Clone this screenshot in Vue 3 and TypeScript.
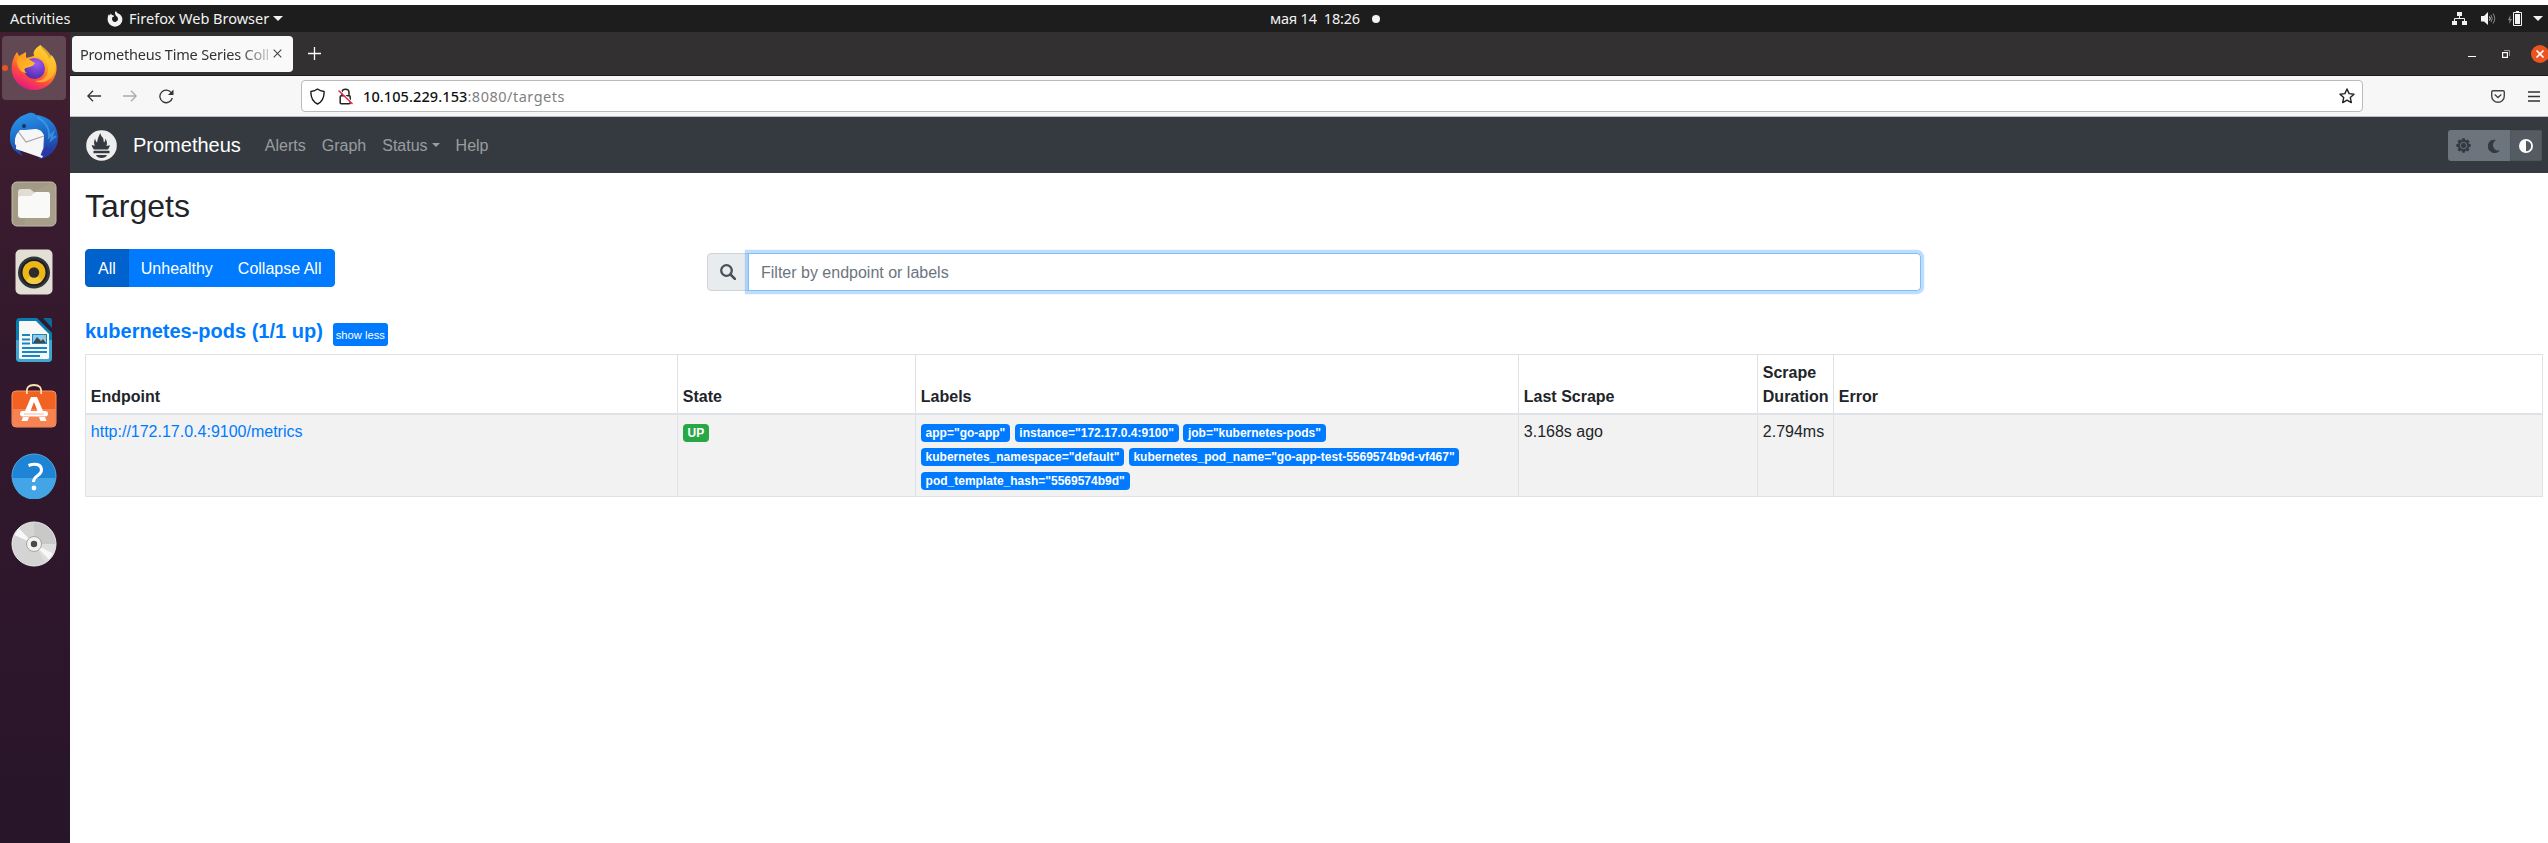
<script setup lang="ts">
interface Column { title: string; cls: string }

const navLinks: { label: string; caret?: boolean }[] = [
  { label: 'Alerts' },
  { label: 'Graph' },
  { label: 'Status', caret: true },
  { label: 'Help' },
]
const filters: string[] = ['All', 'Unhealthy', 'Collapse All']
const columns: Column[] = [
  { title: 'Endpoint', cls: 'c-endpoint' },
  { title: 'State', cls: 'c-state' },
  { title: 'Labels', cls: 'c-labels' },
  { title: 'Last Scrape', cls: 'c-last' },
  { title: 'Scrape Duration', cls: 'c-duration' },
  { title: 'Error', cls: 'c-error' },
]
const labels: string[] = [
  'app="go-app"',
  'instance="172.17.0.4:9100"',
  'job="kubernetes-pods"',
  'kubernetes_namespace="default"',
  'kubernetes_pod_name="go-app-test-5569574b9d-vf467"',
  'pod_template_hash="5569574b9d"',
]
const rays: number[] = [0, 45, 90, 135, 180, 225, 270, 315]
</script>

<template>
  <div class="desktop">
    <header class="topbar">
      <span class="activities">Activities</span>
      <svg class="ff-mono" width="16" height="16" viewBox="0 0 16 16">
        <path d="M8 1c.6-.6.8-.7 1.100-1 .2 1 .8 1.600 1.700 2.300C13.800 3.500 15.400 5.600 15.400 8.500A7.400 7.200 0 0 1 .6 8.500C.6 6.300 1 4.500 2 3l.6 1.400L4 2.600l.8 1.500c1 0 1.800.3 2.300.9-.4 1-1.300 1.200-2.100 1.500C5.200 8 5 8.400 5.200 9a3 3 0 0 0 5.800-.7c0-1.300-.5-2.200-1.500-3C8.400 4.200 7.800 2.700 8 1z" fill="#f2f2f2" />
      </svg>
      <span class="appname">Firefox Web Browser</span>
      <svg class="tri" width="10" height="5" viewBox="0 0 10 5"><path d="M0 0h10L5 5z" fill="#f2f2f2" /></svg>
      <div class="clock"><span>мая 14&nbsp; 18:26</span><i></i></div>
      <div class="tray">
        <svg width="15" height="14" viewBox="0 0 15 14">
          <path d="M5 0h5v4H5zM0 9h5v4H0zM10 9h5v4h-5z" fill="#f2f2f2" />
          <path d="M7.500 4v2.500M2.500 9V6.500h10V9" fill="none" stroke="#f2f2f2" />
        </svg>
        <svg class="vol" width="15" height="14" viewBox="0 0 15 14">
          <path d="M0 4h3l4-4v13L3 9.500H0z" fill="#f2f2f2" />
          <path d="M8.500 4.500q1.500 2 0 4" fill="none" stroke="#f2f2f2" />
          <path d="M10 3q2.500 3.500 0 7M12 1.500q3.500 5 0 10" fill="none" stroke="#8a8a8a" />
        </svg>
        <svg class="bat" width="14" height="16" viewBox="0 0 14 16">
          <path d="M2.500 4L0 9h1.500L1 13 4 8H2.200z" fill="#8a8a8a" />
          <path d="M5.500 1.500h8v13h-8z" fill="none" stroke="#f2f2f2" />
          <path d="M8 0h3v1H8zM7 3h5v10H7z" fill="#f2f2f2" />
        </svg>
        <svg class="tri" width="10" height="5" viewBox="0 0 10 5"><path d="M0 0h10L5 5z" fill="#f2f2f2" /></svg>
      </div>
    </header>

    <div class="body">
      <nav class="dock">
        <div class="slot active">
          <span class="dot"></span>
          <svg width="46" height="48" viewBox="0 0 46 48">
            <defs>
              <linearGradient id="ffa" x1=".8" y1="0" x2=".3" y2="1">
                <stop offset="0" stop-color="#fff14a" /><stop offset=".4" stop-color="#ffa21f" />
                <stop offset=".7" stop-color="#ff4a3f" /><stop offset="1" stop-color="#e31587" />
              </linearGradient>
              <radialGradient id="ffb" cx=".6" cy=".25" r=".8"><stop offset="0" stop-color="#a05bf2" /><stop offset="1" stop-color="#4a2aa8" /></radialGradient>
              <linearGradient id="ffc" x1="0" y1="0" x2="1" y2="1"><stop offset="0" stop-color="#ff9a1f" /><stop offset="1" stop-color="#ffc52e" /></linearGradient>
            </defs>
            <path d="M29.500 1c1 4 4 6 7 10l2 4 2-4c4 5 5.500 9 5 15A22.500 22 0 0 1 .6 25C.4 19 2 14 6 8l2 4 7-4 0 6 8-2c-1-5 2-8 6.500-11z" fill="url(#ffa)" />
            <circle cx="23.500" cy="24.500" r="10.500" fill="url(#ffb)" />
            <path d="M24 12c7 0 14 5 13 15-1 7-7 10-13 10 7 4 19-1 20-12C45 17 39 8 29.500 1 23 5 21 9 24 12z" fill="#ffc32b" opacity=".75" />
            <path d="M6 15c3-3 7-3 10-1l8 5c-1 3-5 4-9 5-3 1-1 4 1 5-5 0-8-3-9-7-1-3-2-4-1-7z" fill="url(#ffc)" />
          </svg>
        </div>
        <div class="slot">
          <svg width="48" height="48" viewBox="0 0 48 48">
            <defs><linearGradient id="tb" x1=".3" y1="0" x2=".6" y2="1"><stop offset="0" stop-color="#2b93e6" /><stop offset=".5" stop-color="#1d6cc9" /><stop offset="1" stop-color="#25339b" /></linearGradient></defs>
            <path d="M19 1c4-1 6 1 7 2 13 1 22 10 22 23 0 9-6 17-14 20l-5 1 3-5L4 38C1 34 0 30 0 25 0 14 6 6 14 3z" fill="url(#tb)" />
            <path d="M6 17L28 14l6 9-1 22L4 36z" fill="#f6f6f6" />
            <path d="M8 19l8 11 18-6" fill="none" stroke="#a5a5a5" stroke-width="1.200" />
            <path d="M0 25C0 13 8 4 20 3c13 0 17 12 15 21-2-5-6-7-10-7l-10 1-5 0c-4 4-6 9-5 14l8 12C5 41 0 34 0 25z" fill="url(#tb)" />
            <path d="M33 37l5-3-1 4 6-4c-3 7-8 12-14 13z" fill="#293aa7" />
            <path d="M6 34l27 10-1 2-26-9z" fill="#f6f6f6" />
            <path d="M27 5c7 4 13 11 12 20l4-4-2 7 5-4" fill="none" stroke="#49aaf0" stroke-width="2" opacity=".6" />
            <circle cx="14" cy="14" r="2" fill="#133368" />
          </svg>
        </div>
        <div class="slot">
          <svg width="46" height="46" viewBox="0 0 46 46">
            <rect x="1" y="1" width="44" height="44" rx="5" fill="#a29a85" stroke="#c4bda9" />
            <path d="M40 2L14 16v28h28q2 0 2-3V5z" fill="#aca48f" opacity=".5" />
            <path d="M7 11q0-3 3-3h9l4 3v6H7z" fill="#e1ddd2" />
            <path d="M7 17q0-2 3-2h10l4-4h13q2 0 2 3v20q0 3-3 3H10q-3 0-3-3z" fill="#f9f9f8" />
          </svg>
        </div>
        <div class="slot">
          <svg width="38" height="46" viewBox="0 0 38 46">
            <rect x=".5" y=".5" width="37" height="45" rx="5" fill="#e3dfd5" />
            <circle cx="19" cy="23.500" r="16" fill="#30343b" /><circle cx="19" cy="23.500" r="13.300" fill="#191c23" />
            <circle cx="19" cy="23.500" r="11.500" fill="#edb718" />
            <path d="M11 32a11.500 11.500 0 0 0 16 0L19 23z" fill="#f8d75b" opacity=".6" />
            <circle cx="19" cy="23.500" r="5.200" fill="#2d2d2d" />
          </svg>
        </div>
        <div class="slot">
          <svg width="38" height="46" viewBox="0 0 38 46">
            <path d="M5 1h17l15 15v25q0 4-4 4H5q-4 0-4-4V5q0-4 4-4z" fill="#087daf" />
            <path d="M1 23h36v18q0 4-4 4H5q-4 0-4-4z" fill="#42a6d5" />
            <path d="M5 4h16l13 13v24q0 1-2 1H6q-2 0-2-1V5q0-1 1-1z" fill="#f7f8f8" />
            <path d="M28 1h7q2 0 2 3v7z" fill="#086b9b" />
            <path d="M7 18h8M7 22.500h8M7 26.500h8M7 31h25M7 35h25M7 39h18" stroke="#1886c3" stroke-width="2" />
            <rect x="17.500" y="17.500" width="14" height="9" fill="#8bcdf0" stroke="#1886c3" />
            <path d="M18 26l4-6 4 4 2-2 3 4z" fill="#464646" /><path d="M29 18h2v2h-2z" fill="#f5b512" />
          </svg>
        </div>
        <div class="slot store">
          <svg width="46" height="46" viewBox="0 0 46 46">
            <rect x="1" y="8" width="44" height="36" rx="4" fill="#f26223" stroke="#f89468" />
            <path d="M1.500 26h43v14q0 3.500-3.500 3.500H5q-3.500 0-3.500-3.500z" fill="#f68452" />
            <path d="M16 11C15 4 18 2 23 2s8 2 7 9" fill="none" stroke="#fbe1ae" stroke-width="1.800" />
            <path d="M20 14h6l6 14h-5.500L23 19l-3.500 9H14zM12 34h6l-1.500 4h-6zM28 34h6l1.500 4h-6z" fill="#fff" />
            <rect x="9" y="28" width="28" height="5.500" rx="2.700" fill="#fff" />
            <path d="M13 31h20" stroke="#f9b79a" />
          </svg>
        </div>
        <div class="slot">
          <svg width="46" height="46" viewBox="0 0 46 46">
            <circle cx="23" cy="23" r="22" fill="#1e84d6" stroke="#5aa7e0" />
            <path d="M1.500 25h43a21.500 21.500 0 0 1-43 0z" fill="#43a5e5" />
            <path d="M17.500 12.500c8-3 13-.5 13 4.500 0 6-8 5-8 12" fill="none" stroke="#fff" stroke-width="3" />
            <circle cx="23" cy="35" r="2.400" fill="#fff" />
          </svg>
        </div>
        <div class="slot">
          <svg width="46" height="46" viewBox="0 0 46 46">
            <circle cx="23" cy="23" r="22" fill="#d4d4d4" stroke="#ededed" />
            <path d="M23 23V1.500A21.500 21.500 0 0 1 44.500 23z" fill="#c9c9c9" />
            <path d="M23 23l21.500 0A21.500 21.500 0 0 1 34 41z" fill="#dedede" />
            <path d="M23 23L3.500 14 8 7.500zM23 23l15 15.500 4-6z" fill="#f8f8f8" />
            <circle cx="23" cy="23" r="7.500" fill="#f2f2f0" stroke="#aaa594" />
            <circle cx="23" cy="23" r="3.200" fill="#4a4a4a" />
          </svg>
        </div>
      </nav>

      <main class="window">
        <div class="tabs">
          <div class="tab">
            <span class="tabtitle">Prometheus Time Series Coll</span>
            <svg width="9" height="9" viewBox="0 0 9 9"><path d="M.7.7l7.600 7.600M8.300.7L.7 8.300" stroke="#444" stroke-width="1.100" /></svg>
          </div>
          <svg class="plus" width="13" height="13" viewBox="0 0 13 13"><path d="M6.500 0v13M0 6.500h13" stroke="#fff" stroke-width="1.300" /></svg>
          <div class="controls">
            <svg class="min" width="8" height="1" viewBox="0 0 8 1"><path d="M0 0h8v1H0z" fill="#fff" /></svg>
            <svg class="restore" width="8" height="8" viewBox="0 0 8 8">
              <path d="M2 .5h5.500V6" fill="none" stroke="#999" /><rect x=".6" y="2.600" width="4.800" height="4.800" fill="none" stroke="#fff" stroke-width="1.200" />
            </svg>
            <svg class="close" width="18" height="18" viewBox="0 0 18 18"><circle cx="9" cy="9" r="9" fill="#e95420" /><path d="M5.500 5.500l7 7M12.500 5.500l-7 7" stroke="#fff" stroke-width="1.600" /></svg>
          </div>
        </div>

        <div class="toolbar">
          <svg class="back" width="14" height="12" viewBox="0 0 14 12"><path d="M14 6H1M6 .7L.8 6 6 11.300" fill="none" stroke="#333" stroke-width="1.300" /></svg>
          <svg class="fwd" width="14" height="12" viewBox="0 0 14 12"><path d="M0 6h13M8 .7L13.200 6 8 11.300" fill="none" stroke="#aaa" stroke-width="1.300" /></svg>
          <svg class="reload" width="15" height="15" viewBox="0 0 15 15"><path d="M13.300 9A6.300 6.300 0 1 1 12.500 4" fill="none" stroke="#333" stroke-width="1.300" /><path d="M14.500.5v5.500H9z" fill="#333" /></svg>
          <div class="urlbar">
            <svg width="15" height="17" viewBox="0 0 15 17"><path d="M7.500 1C5.500 2.500 3 3.200.9 3.500.7 9 2 13.500 7.500 16 13 13.500 14.300 9 14.100 3.500 12 3.200 9.500 2.500 7.500 1z" fill="none" stroke="#1b1b1b" stroke-width="1.400" stroke-linejoin="round" /></svg>
            <svg class="lock" width="15" height="17" viewBox="0 0 15 17">
              <rect x="2.200" y="7.700" width="10" height="8" rx="1" fill="none" stroke="#222" stroke-width="1.500" />
              <path d="M4 7.500V4.500C4 .2 11 .2 11 4.500v3" fill="none" stroke="#222" stroke-width="1.500" />
              <path d="M1.600 2.100l13.500 13" stroke="#fff" stroke-width="1.200" /><path d="M.5 2.500l14 13.500" stroke="#e22850" stroke-width="1.500" />
            </svg>
            <span class="url"><b>10.105.229.153</b>:8080/targets</span>
            <svg class="star" width="16" height="16" viewBox="0 0 16 16"><path d="M8 1l2.100 4.600 4.900.6-3.700 3.400 1 5L8 12.200l-4.300 2.400 1-5L1 6.200l4.900-.6z" fill="none" stroke="#222" stroke-width="1.400" stroke-linejoin="round" /></svg>
          </div>
          <svg class="pocket" width="14" height="13" viewBox="0 0 14 13"><path d="M2 .7h10q1.300 0 1.300 1.300v4a6.300 6.300 0 0 1-12.600 0V2Q.7.700 2 .7z" fill="none" stroke="#444" stroke-width="1.400" /><path d="M3.700 4.500L7 7.500l3.300-3" fill="none" stroke="#444" stroke-width="1.400" /></svg>
          <svg class="menu" width="12" height="11" viewBox="0 0 12 11"><path d="M0 1h12M0 5.500h12M0 10h12" stroke="#333" stroke-width="1.300" /></svg>
        </div>

        <div class="navbar">
          <svg class="logo" width="31" height="31" viewBox="0 0 31 31">
            <circle cx="15.500" cy="15.500" r="15.300" fill="#eee" />
            <path d="M7.500 20.800h16v2.400h-16zM10 25h11c-.5 2-3 3-5.500 3S10.500 27 10 25zM8 19.500c-1.300-1.500-2-3-2.300-4.500l3 .8c-.9-3-.9-5 .5-7.300.1 2 .8 3 1.800 4 .9-3 .7-5 3.500-9.500 0 3 2 3.500 2.700 5.500.4 1.400.4 3 .8 4 .7-1 1.500-2 1.200-4 2 3 2.300 5 1.200 7.500l3.500-.8c-.4 1.600-1 2.900-2.100 4.300z" fill="#343a40" />
          </svg>
          <span class="brand">Prometheus</span>
          <a v-for="l in navLinks" :key="l.label" class="navlink">{{ l.label }}<i v-if="l.caret" class="caret"></i></a>
          <div class="theme">
            <span>
              <svg width="15" height="15" viewBox="-7.500 -7.500 15 15">
                <path v-for="r in rays" :key="r" :transform="`rotate(${r})`" d="M-2.300-4L-1.200-7.200H1.200L2.300-4z" fill="#343a40" />
                <circle r="5" fill="#343a40" /><circle r="3.200" fill="none" stroke="#6c757d" stroke-width="1" />
              </svg>
            </span>
            <span><svg width="13" height="14" viewBox="0 0 13 14"><path d="M8 1A7 6.500 0 1 0 12 11.500C5 12.500 2.500 4 8 1z" fill="#343a40" /></svg></span>
            <span class="on"><svg width="14" height="14" viewBox="0 0 14 14"><circle cx="7" cy="7" r="6.100" fill="none" stroke="#fff" stroke-width="1.800" /><path d="M7 1v12A6 6 0 0 1 7 1z" fill="#fff" /></svg></span>
          </div>
        </div>

        <section class="page">
          <h2>Targets</h2>
          <div class="controls-row">
            <div class="btn-group">
              <button v-for="(f, i) in filters" :key="f" type="button" :class="{ pressed: i === 0 }">{{ f }}</button>
            </div>
            <div class="search">
              <span class="addon"><svg width="16" height="16" viewBox="0 0 16 16"><circle cx="6.500" cy="6.500" r="5.300" fill="none" stroke="#495057" stroke-width="2.300" /><path d="M10.500 10.500l4.400 4.400" stroke="#495057" stroke-width="2.600" stroke-linecap="round" /></svg></span>
              <input type="text" placeholder="Filter by endpoint or labels" />
            </div>
          </div>
          <div class="pool">
            <h3>kubernetes-pods (1/1 up)</h3>
            <button type="button">show less</button>
          </div>
          <table>
            <thead>
              <tr><th v-for="c in columns" :key="c.title" :class="c.cls">{{ c.title }}</th></tr>
            </thead>
            <tbody>
              <tr>
                <td><a>http://172.17.0.4:9100/metrics</a></td>
                <td><span class="badge up">UP</span></td>
                <td class="labels"><template v-for="l in labels" :key="l"><span class="badge">{{ l }}</span>{{ ' ' }}</template></td>
                <td>3.168s ago</td>
                <td>2.794ms</td>
                <td></td>
              </tr>
            </tbody>
          </table>
        </section>
      </main>
    </div>
  </div>
</template>

<style>
body { margin: 0; background: #fff; overflow: hidden; }
</style>

<style scoped>
* { box-sizing: border-box; }
svg { display: block; flex: none; }
.desktop { width: 2548px; height: 843px; padding-top: 5px; display: flex; flex-direction: column; overflow: hidden; font-family: "Liberation Sans", Arial, sans-serif; color: #212529; }
.topbar { height: 27px; flex: none; background: #1d1d1d; color: #f2f2f2; display: flex; align-items: center; padding-left: 10px; position: relative; font: 14.500px/27px "Noto Sans", sans-serif; white-space: nowrap; }
.activities { width: 97px; }
.appname { margin-left: 6px; width: 138px; }
.topbar > .tri { margin-left: 6px; }
.clock { position: absolute; left: 1270px; display: flex; align-items: center; }
.clock span { width: 90px; letter-spacing: -.2px; }
.clock i { width: 8px; height: 8px; margin-left: 12px; border-radius: 50%; background: #f2f2f2; }
.tray { margin-left: auto; display: flex; align-items: center; padding-right: 5px; }
.vol { margin-left: 14px; }
.bat { margin-left: 12px; }
.tray .tri { margin-left: 11px; }

.body { flex: 1; display: flex; min-height: 0; }
.dock { width: 70px; flex: none; background: linear-gradient(#411f30, #34192d 35%, #28152a); padding: 4px 4px 0 2px; display: flex; flex-direction: column; gap: 4px; }
.slot { height: 64px; flex: none; border-radius: 4px; display: flex; align-items: center; justify-content: center; position: relative; }
.slot.active { background: #614853; }
.slot.store { padding-bottom: 5px; }
.dot { position: absolute; left: 0; top: 29px; width: 6px; height: 6px; border-radius: 50%; background: #e95420; }

.window { flex: 1; min-width: 0; background: #fff; }
.tabs { height: 44px; background: #333031; border-bottom: 1px solid #1c1a1b; display: flex; align-items: center; padding-left: 2px; }
.tab { width: 221px; height: 36px; border-radius: 4px; background: #f9f9fa; display: flex; align-items: center; padding-left: 8px; font: 14.500px/36px "Noto Sans", sans-serif; color: #333; }
.tabtitle { width: 190px; white-space: nowrap; margin-right: 3px; letter-spacing: -.2px; -webkit-mask-image: linear-gradient(90deg, #000 158px, transparent 198px); mask-image: linear-gradient(90deg, #000 158px, transparent 198px); }
.plus { margin-left: 15px; }
.controls { margin-left: auto; display: flex; align-items: center; margin-right: -1px; }
.min { margin-top: 5px; }
.restore { margin-left: 26px; }
.close { margin-left: 21px; }

.toolbar { height: 41px; background: #f7f7f7; border-bottom: 1px solid #bdbdbd; display: flex; align-items: center; padding-left: 17px; }
.fwd { margin-left: 22px; }
.reload { margin-left: 22px; }
.urlbar { margin-left: 127px; width: 2062px; height: 32px; border: 1px solid #bababa; border-radius: 4px; background: #fff; display: flex; align-items: center; padding: 0 7px 0 8px; }
.lock { margin-left: 13px; }
.url { margin-left: 10px; font: 14.500px/30px "Noto Sans", sans-serif; letter-spacing: .5px; color: #808080; }
.url b { font-weight: 500; letter-spacing: .1px; color: #111; }
.star { margin-left: auto; }
.pocket { margin-left: 128px; }
.menu { margin-left: 23px; }

.navbar { height: 56px; background: #343a40; display: flex; align-items: center; padding: 0 6px 0 16px; }
.brand { margin-left: 16px; margin-right: 16px; margin-top: -1px; font-size: 20px; line-height: 30px; color: #fff; }
.navlink { padding: 0 8px; font-size: 16px; line-height: 24px; margin-top: 1px; color: rgba(255, 255, 255, .5); }
.caret { display: inline-block; margin-left: 4px; vertical-align: 4px; border-top: 4.800px solid; border-left: 4.800px solid transparent; border-right: 4.800px solid transparent; }
.theme { margin-left: auto; height: 31px; display: flex; border-radius: 3px; overflow: hidden; background: #6c757d; margin-top: 1px; }
.theme span { width: 31px; display: flex; align-items: center; justify-content: center; }
.theme .on { width: 32px; background: #545b62; border: 1px solid #4e555b; }

.page { padding: 14px 6px 0 15px; }
h2 { margin: 0; font-size: 32px; line-height: 38px; height: 62px; font-weight: 400; }
.controls-row { display: flex; align-items: flex-start; height: 68px; }
.btn-group { display: flex; width: 622px; }
.btn-group button { height: 38px; padding: 2px 12px 0; border: 1px solid #007bff; background: #007bff; color: #fff; font: 16px/24px "Liberation Sans", Arial, sans-serif; margin-left: -1px; }
.btn-group button:first-child { margin-left: 0; border-radius: 4px 0 0 4px; }
.btn-group button:last-child { border-radius: 0 4px 4px 0; padding-right: 13px; }
.btn-group .pressed { background: #0062cc; border-color: #005cbf; position: relative; }
.search { margin-top: 4px; width: 1214px; display: flex; }
.addon { width: 42px; height: 38px; flex: none; border: 1px solid #ced4da; border-radius: 4px 0 0 4px; background: #e9ecef; display: flex; align-items: center; justify-content: center; }
.search input { flex: 1; min-width: 0; height: 38px; margin-left: -1px; padding: 7px 12px 5px; border: 1px solid #80bdff; border-radius: 0 4px 4px 0; box-shadow: 0 0 0 3.200px rgba(0, 123, 255, .25); font: 16px/24px "Liberation Sans", Arial, sans-serif; outline: none; background: #fff; z-index: 1; }
.search input::placeholder { color: #6c757d; opacity: 1; }
.pool { display: flex; height: 37px; }
.pool h3 { margin: 2px 0 0; font-size: 20px; line-height: 24px; font-weight: 700; color: #007bff; }
.pool button { margin: 6px 0 0 10px; width: 55px; height: 23px; padding: 0; border: 0; border-radius: 3px; background: #007bff; color: #fff; font: 11.200px/22px "Liberation Sans", Arial, sans-serif; }
table { width: 2458px; table-layout: fixed; border-collapse: collapse; font-size: 16px; line-height: 24px; }
th, td { border: 1px solid #dee2e6; padding: 5.800px 4.800px 3.800px; text-align: left; vertical-align: top; }
th { vertical-align: bottom; border-bottom-width: 2px; font-weight: 700; }
tbody tr { background: #f2f2f2; }
.c-endpoint { width: 592px; }
.c-state { width: 238px; }
.c-labels { width: 603px; }
.c-last { width: 239px; }
.c-duration { width: 76px; }
td a { color: #007bff; }
.badge { display: inline-block; padding: 3px 4.800px; border-radius: 4px; font-size: 12px; line-height: 12px; font-weight: 700; color: #fff; background: #007bff; vertical-align: baseline; white-space: nowrap; }
.badge.up { background: #28a745; }
</style>
